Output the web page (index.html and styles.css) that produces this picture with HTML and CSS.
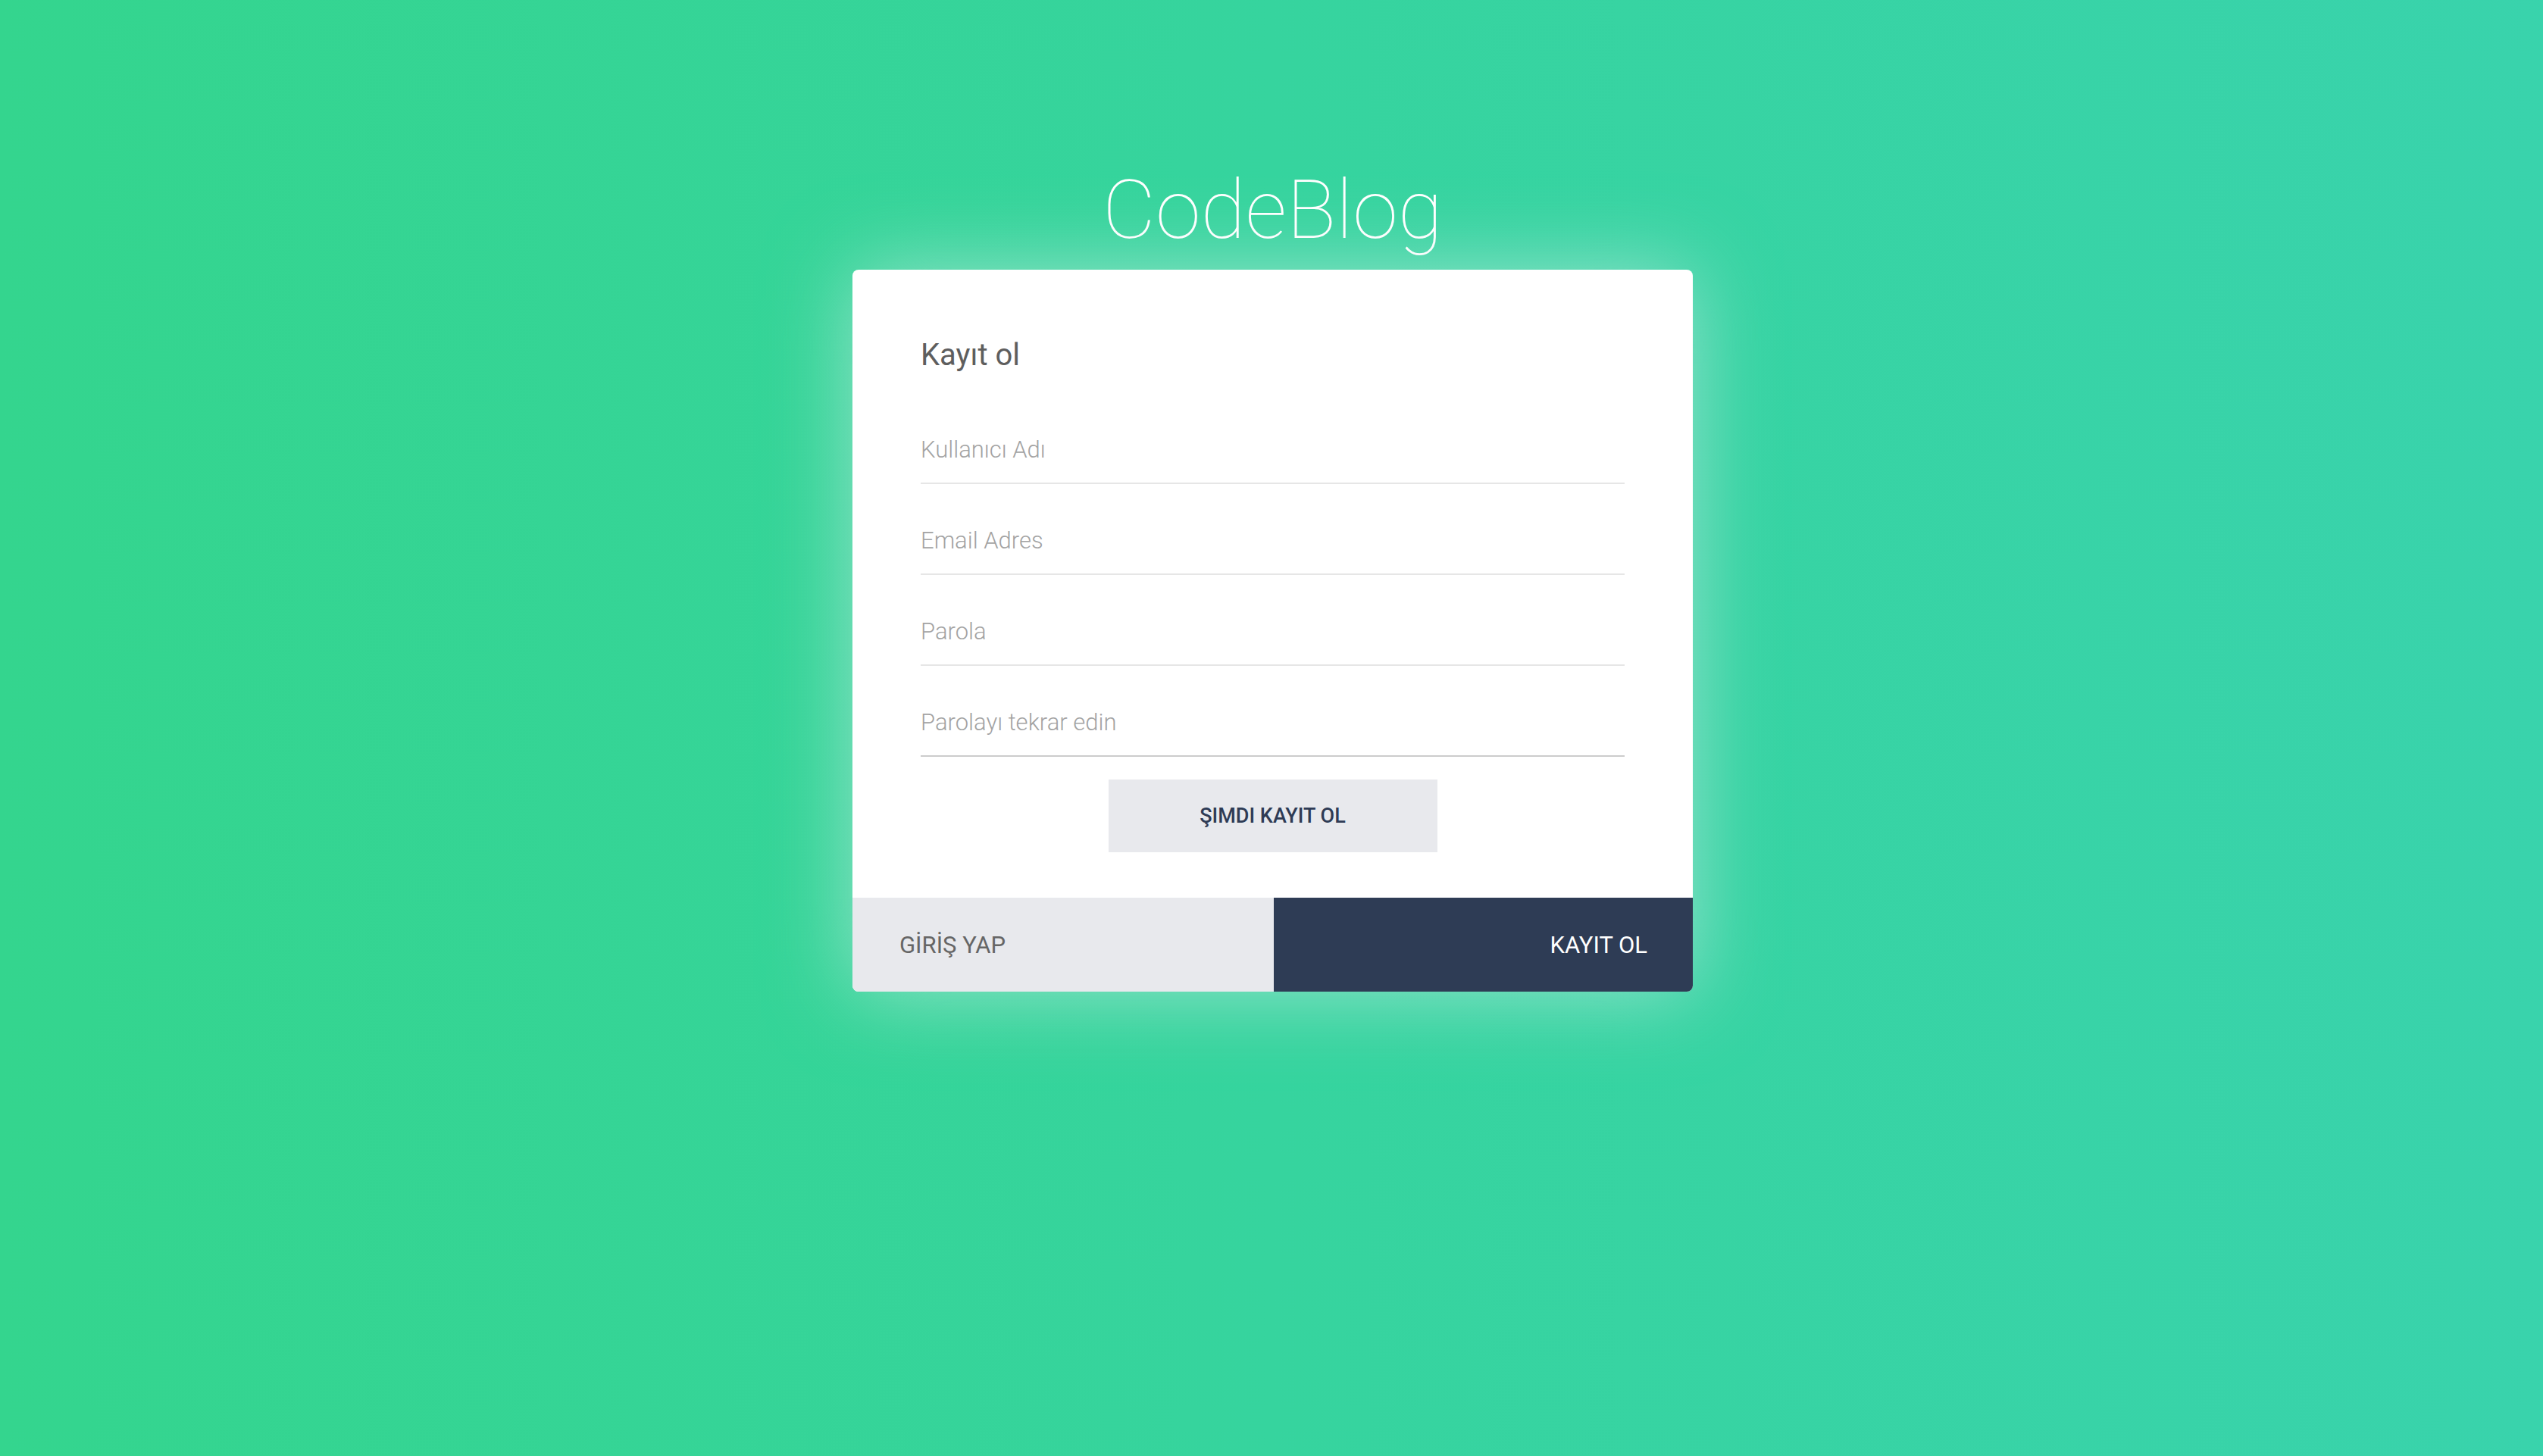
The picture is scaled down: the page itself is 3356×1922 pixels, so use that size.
FILE: index.html
```html
<!DOCTYPE html>
<html lang="tr">
<head>
<meta charset="utf-8">
<title>CodeBlog - Kayıt ol</title>
<link rel="stylesheet" href="styles.css">
</head>
<body>
<main class="page">
  <h1 class="brand">CodeBlog</h1>
  <section class="card">
    <form class="form">
      <h2 class="form-title">Kayıt ol</h2>
      <input class="field" type="text" placeholder="Kullanıcı Adı">
      <input class="field" type="email" placeholder="Email Adres">
      <input class="field" type="password" placeholder="Parola">
      <input class="field field-last" type="password" placeholder="Parolayı tekrar edin">
      <div class="actions">
        <button class="submit" type="button">ŞIMDI KAYIT OL</button>
      </div>
    </form>
    <nav class="tabs">
      <a class="tab tab-login">GİRİŞ YAP</a>
      <a class="tab tab-register">KAYIT OL</a>
    </nav>
  </section>
</main>
</body>
</html>
```
FILE: styles.css
```css
html, body {
  margin: 0;
  padding: 0;
  height: 100%;
}
body {
  background: linear-gradient(to right, #34d58e 0%, #36d49e 50%, #39d3ac 100%);
  font-family: Roboto, "Noto Sans", sans-serif;
  min-height: 1922px;
}
.page {
  display: flex;
  flex-direction: column;
  align-items: center;
  padding-top: 223px;
  padding-left: 3px;
}
.brand {
  margin: 0 0 25px;
  font-size: 108px;
  line-height: 108px;
  font-weight: 100;
  color: #ffffff;
  letter-spacing: 0;
}
.card {
  width: 1109px;
  background: #ffffff;
  border-radius: 8px;
  box-shadow: 0 0 110px rgba(225, 238, 240, 0.55);
  overflow: hidden;
}
.form {
  display: flex;
  flex-direction: column;
  padding: 88px 90px 60px;
}
.form-title {
  margin: 0 0 25px;
  font-size: 40px;
  line-height: 50px;
  font-weight: 400;
  color: #5e5e5e;
}
.field {
  box-sizing: border-box;
  height: 120px;
  width: 100%;
  padding: 46px 0 16px;
  border: none;
  border-bottom: 2px solid #e6e6e6;
  outline: none;
  font-family: Roboto, sans-serif;
  font-size: 31px;
  font-weight: 300;
  color: #555;
  background: transparent;
}
.field::placeholder {
  color: #a3a3a3;
  font-weight: 300;
}
.field-last {
  border-bottom-color: #cccccc;
}
.actions {
  display: flex;
  justify-content: center;
  margin-top: 30px;
}
.submit {
  width: 434px;
  height: 96px;
  border: none;
  background: #e8e9ed;
  color: #2e3b55;
  font-family: Roboto, sans-serif;
  font-size: 27px;
  font-weight: 500;
  cursor: pointer;
}
.tabs {
  display: flex;
  height: 124px;
}
.tab {
  flex: 1;
  display: flex;
  align-items: center;
  font-size: 31px;
  font-weight: 400;
}
.tab-login {
  background: #e8e9ed;
  color: #666666;
  padding-left: 62px;
}
.tab-register {
  background: #2e3c55;
  color: #ffffff;
  justify-content: flex-end;
  padding-right: 60px;
}
```
